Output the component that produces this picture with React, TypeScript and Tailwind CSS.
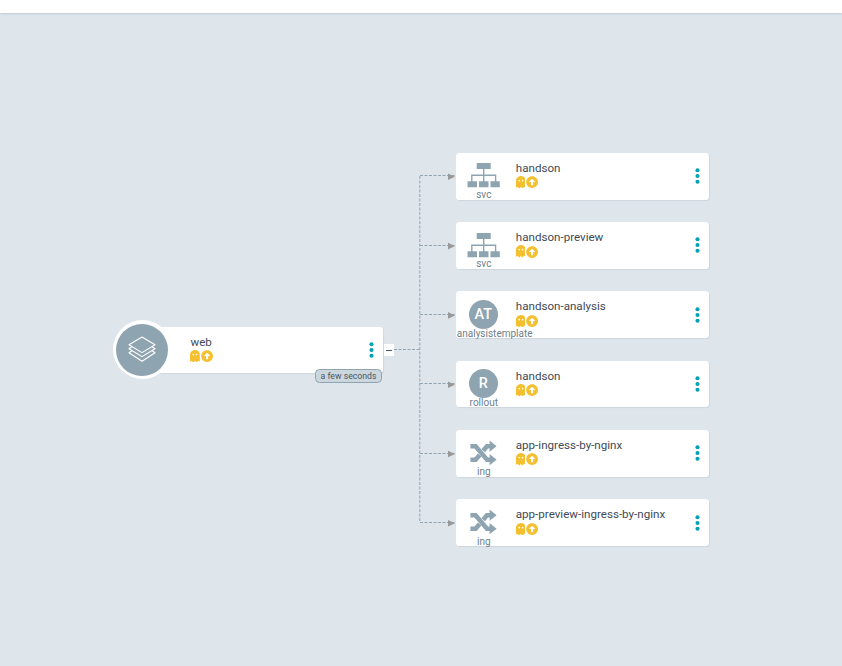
import React from "react";
import { FaArrowAltCircleUp, FaGhost } from "react-icons/fa";

type Kind = "svc" | "analysistemplate" | "rollout" | "ing";

const resources: { name: string; kind: Kind; top: number }[] = [
  { name: "handson", kind: "svc", top: 152.8 },
  { name: "handson-preview", kind: "svc", top: 222.1 },
  { name: "handson-analysis", kind: "analysistemplate", top: 291.4 },
  { name: "handson", kind: "rollout", top: 360.7 },
  { name: "app-ingress-by-nginx", kind: "ing", top: 430 },
  { name: "app-preview-ingress-by-nginx", kind: "ing", top: 499.3 },
];

function SitemapIcon() {
  return (
    <svg className="h-[25px] w-[33px]" viewBox="0 0 33 25" fill="#8fa4b1">
      <path d="M9.7 0h14v6h-14zM.5 18.2h9.5v6H.5zM12 18.2h9.5v6H12zM23.5 18.2h9.3v6h-9.3z" />
      <path d="M16.7 6v13M4.8 19v-6.7h23.8V19" fill="none" stroke="#8fa4b1" strokeWidth="1.4" />
    </svg>
  );
}

function ShuffleIcon() {
  return (
    <svg className="-mt-[1px] h-[26px] w-[27px]" viewBox="0 0 27 26" fill="none" stroke="#8fa4b1" strokeWidth="4.6">
      <path d="M.4 6.2H5.6L17 19.7H21" />
      <path d="M.4 19.7H5.6L9.6 15M13.2 10.7L17 6.2H21" />
      <path d="M19.6.6 26.6 6.2 19.6 11.8zM19.6 14.1 26.6 19.7 19.6 25.3z" fill="#8fa4b1" stroke="none" />
    </svg>
  );
}

function LayersIcon() {
  return (
    <svg className="h-[27px] w-[28px]" viewBox="0 0 28 27" fill="none" stroke="#fff" strokeWidth="1.1" strokeLinejoin="round">
      <path d="M14 1 27 8.8 14 16.6 1 8.8z" />
      <path d="M3.8 10.7 1 12.8l13 7.8 13-7.8-2.8-2.1" />
      <path d="M3.8 14.7 1 16.8l13 8.4 13-8.4-2.8-2.1" />
    </svg>
  );
}

function KindIcon({ kind }: { kind: Kind }) {
  if (kind === "svc") return <SitemapIcon />;
  if (kind === "ing") return <ShuffleIcon />;
  return (
    <div className="flex size-[29px] items-center justify-center rounded-full bg-[#8fa4b1] text-[14.4px] font-medium text-white">
      {kind === "rollout" ? "R" : "AT"}
    </div>
  );
}

function Status() {
  return (
    <div className="-ml-[0.2px] flex h-[13px] items-center text-[#f4c030]">
      <FaGhost className="h-[12.4px] w-[9.8px]" preserveAspectRatio="none" />
      <FaArrowAltCircleUp className="ml-[0.9px] size-[12.2px]" />
    </div>
  );
}

function Dots() {
  return (
    <svg className="h-4 w-[5px]" viewBox="0 0 5 16" fill="#00a2b3">
      <circle cx="2.5" cy="2.3" r="2.05" />
      <circle cx="2.5" cy="8" r="2.05" />
      <circle cx="2.5" cy="13.7" r="2.05" />
    </svg>
  );
}

function ResourceCard({ name, kind, top }: { name: string; kind: Kind; top: number }) {
  return (
    <div
      className="absolute left-[455.8px] flex h-[46.8px] w-[253.6px] rounded-[3.6px] bg-white shadow-[1px_1px_1px_#ccd6dd]"
      style={{ top }}
    >
      <div className="relative flex w-[55px] shrink-0 justify-center">
        <div className="flex h-[46px] items-center">
          <KindIcon kind={kind} />
        </div>
        <div className="absolute top-[36.3px] left-[1px] flex min-w-[54px] justify-center text-[10px] leading-3 whitespace-nowrap text-[#6d7f8b]">
          {kind}
        </div>
      </div>
      <div className="ml-[5px] flex-1 pt-[8px]">
        <div className="text-[11.6px] leading-[15px] whitespace-nowrap text-[#3f4a56]">{name}</div>
        <Status />
      </div>
      <div className="flex w-[14.5px] items-center">
        <Dots />
      </div>
    </div>
  );
}

function Edges() {
  return (
    <svg className="absolute inset-0 h-full w-full" viewBox="0 0 842 666" fill="none">
      <g stroke="#8fa4b1" strokeWidth="1" strokeDasharray="3 1.5">
        <path d="M394 349.5H420" />
        <path d="M419.8 176V522" />
        {resources.map((r) => (
          <path key={r.top} d={`M420 ${Math.floor(r.top + 23) + 0.5}H455`} />
        ))}
      </g>
      {resources.map((r) => (
        <path key={r.top} d={`M448 ${r.top + 20.7}L455 ${r.top + 24}L448 ${r.top + 27.3}z`} fill="#999" />
      ))}
    </svg>
  );
}

export default function App() {
  return (
    <div className="flex h-[666px] w-[842px] flex-col overflow-hidden bg-[#dee6ec] font-['Roboto',sans-serif]">
      <main className="relative flex-1">
        <header className="h-[13px] bg-white shadow-[0_1px_2px_#bdc8ce]" />
        <Edges />
        <div className="absolute top-[326.6px] left-[129.8px] flex h-[46.8px] w-[253.6px] rounded-[3.6px] bg-white shadow-[1px_1px_1px_#ccd6dd]">
          <div className="-mt-[6.6px] -ml-[17.3px] flex size-[59px] shrink-0 items-center justify-center rounded-full bg-white">
            <div className="flex size-[52px] items-center justify-center rounded-full bg-[#8fa4b1]">
              <LayersIcon />
            </div>
          </div>
          <div className="ml-[19px] flex-1 pt-[8px]">
            <div className="text-[11.6px] leading-[15px] text-[#3f4a56]">web</div>
            <Status />
          </div>
          <div className="flex w-[14.5px] items-center">
            <Dots />
          </div>
        </div>
        <div className="absolute top-[369px] left-[315px] flex h-[14px] w-[67px] items-center justify-center rounded-[4.5px] border border-[#8fa4b1] bg-[#ccd6dd] text-[8.7px] leading-none whitespace-nowrap text-[#495763]">
          a few seconds
        </div>
        <div className="absolute top-[344px] left-[383.5px] flex h-[12px] w-[10px] items-center justify-center bg-white">
          <div className="h-px w-[6px] bg-[#495763]" />
        </div>
        {resources.map((r) => (
          <ResourceCard key={r.top} {...r} />
        ))}
      </main>
    </div>
  );
}
